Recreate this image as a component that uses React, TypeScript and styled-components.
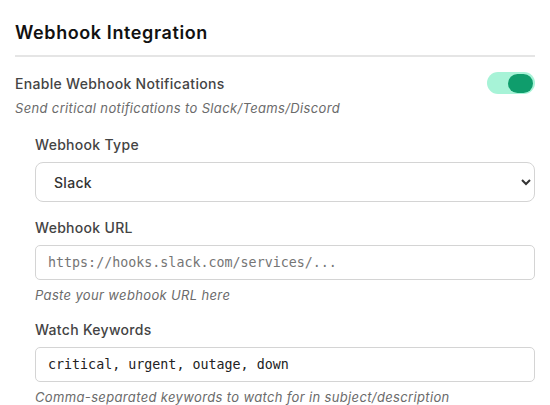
import React, { useState } from "react";
import styled, { createGlobalStyle } from "styled-components";

const GlobalStyle = createGlobalStyle`
  body {
    margin: 0;
    background: #ffffff;
    font-family: "Inter", "Noto Sans", sans-serif;
  }
`;

const Section = styled.section`
  padding: 20px 15px 0 15px;
  width: 520px;
`;

const Title = styled.h2`
  margin: 0;
  font-size: 18px;
  font-weight: 600;
  letter-spacing: 0.6px;
  line-height: 26px;
  color: #111;
  padding-bottom: 9px;
  border-bottom: 2px solid #e5e5e5;
`;

const ToggleRow = styled.div`
  display: flex;
  align-items: center;
  justify-content: space-between;
  margin-top: 15px;
`;

const MainLabel = styled.span`
  font-size: 14px;
  font-weight: 500;
  letter-spacing: 0.3px;
  color: #444;
`;

const Track = styled.button<{ $on: boolean }>`
  width: 48px;
  height: 22px;
  border: none;
  border-radius: 11px;
  padding: 2px;
  display: flex;
  justify-content: ${(p) => (p.$on ? "flex-end" : "flex-start")};
  align-items: center;
  background: ${(p) => (p.$on ? "#a7f3d7" : "#e5e7eb")};
  cursor: pointer;
`;

const Knob = styled.span`
  width: 25px;
  height: 19px;
  border-radius: 10px;
  background: #0f9d6c;
`;

const Help = styled.p<{ $top?: number }>`
  margin: ${(p) => p.$top ?? 6}px 0 0;
  font-size: 13px;
  letter-spacing: 0.35px;
  font-style: italic;
  color: #6b6b6b;
  line-height: 18px;
`;

const Indented = styled.div`
  padding-left: 20px;
`;

const Field = styled.div<{ $top: number }>`
  margin-top: ${(p) => p.$top}px;
  display: flex;
  flex-direction: column;
`;

const FieldLabel = styled.label`
  font-size: 14px;
  font-weight: 500;
  letter-spacing: 0.3px;
  color: #444;
  line-height: 20px;
  margin-bottom: 7px;
`;

const Select = styled.select`
  height: 40px;
  border: 1px solid #d4d4d4;
  border-radius: 8px;
  background: #fff;
  padding: 0 12px 0 14px;
  font-family: "Inter", "Noto Sans", sans-serif;
  font-size: 14px;
  font-weight: 500;
  letter-spacing: 0.3px;
  color: #333;
`;

const Input = styled.input`
  height: 35px;
  box-sizing: border-box;
  border: 1px solid #d4d4d4;
  border-radius: 5px;
  padding: 0 12px;
  font-family: "DejaVu Sans Mono", monospace;
  font-size: 13.33px;
  color: #222;
  &::placeholder {
    color: #757575;
  }
`;

export default function App() {
  const [enabled, setEnabled] = useState(true);
  const [type, setType] = useState("slack");
  const [url, setUrl] = useState("");
  const [keywords, setKeywords] = useState("critical, urgent, outage, down");

  return (
    <>
      <GlobalStyle />
      <Section>
        <Title>Webhook Integration</Title>
        <ToggleRow>
          <MainLabel>Enable Webhook Notifications</MainLabel>
          <Track $on={enabled} onClick={() => setEnabled(!enabled)} aria-label="toggle">
            <Knob />
          </Track>
        </ToggleRow>
        <Help $top={5}>Send critical notifications to Slack/Teams/Discord</Help>
        <Indented>
          <Field $top={18}>
            <FieldLabel>Webhook Type</FieldLabel>
            <Select value={type} onChange={(e) => setType(e.target.value)}>
              <option value="slack">Slack</option>
              <option value="teams">Microsoft Teams</option>
              <option value="discord">Discord</option>
            </Select>
          </Field>
          <Field $top={16}>
            <FieldLabel>Webhook URL</FieldLabel>
            <Input
              value={url}
              onChange={(e) => setUrl(e.target.value)}
              placeholder="https://hooks.slack.com/services/..."
            />
            <Help>Paste your webhook URL here</Help>
          </Field>
          <Field $top={16}>
            <FieldLabel>Watch Keywords</FieldLabel>
            <Input value={keywords} onChange={(e) => setKeywords(e.target.value)} />
            <Help>Comma-separated keywords to watch for in subject/description</Help>
          </Field>
        </Indented>
      </Section>
    </>
  );
}
